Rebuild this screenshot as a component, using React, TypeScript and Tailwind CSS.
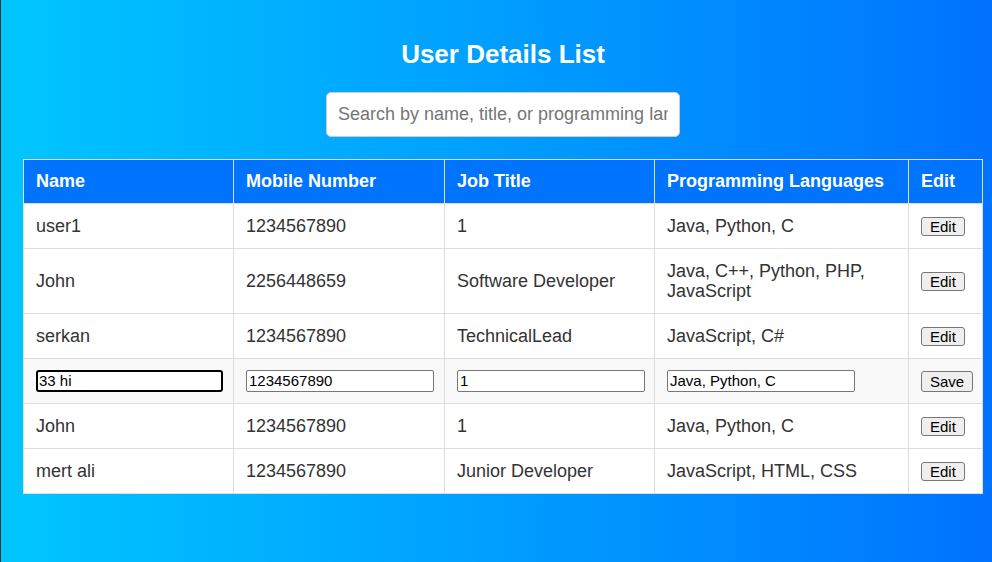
import { useState } from 'react'

type User = { id: number; name: string; mobile: string; title: string; langs: string }

const USERS: User[] = [
  { id: 1, name: 'user1', mobile: '1234567890', title: '1', langs: 'Java, Python, C' },
  { id: 2, name: 'John', mobile: '2256448659', title: 'Software Developer', langs: 'Java, C++, Python, PHP, JavaScript' },
  { id: 3, name: 'serkan', mobile: '1234567890', title: 'TechnicalLead', langs: 'JavaScript, C#' },
  { id: 4, name: '33 hi', mobile: '1234567890', title: '1', langs: 'Java, Python, C' },
  { id: 5, name: 'John', mobile: '1234567890', title: '1', langs: 'Java, Python, C' },
  { id: 6, name: 'mert ali', mobile: '1234567890', title: 'Junior Developer', langs: 'JavaScript, HTML, CSS' },
]

const btn = 'bg-[#efefef] border border-[#767676] rounded-[3px] text-[15px] leading-[17px] px-[8px] text-black'
const inp = 'w-[188px] h-[22px] border border-[#767676] rounded-[2px] px-[2px] text-[15px] text-black bg-white outline-none'
const th = 'border border-[#ddd] px-3 py-3 leading-[19px] font-bold'
const td = 'border border-[#ddd] px-3 py-3 leading-[20px] align-middle'
const ed = 'border border-[#ddd] px-3 py-[11px] align-middle'

export default function App() {
  const [editing] = useState(4)
  const [search, setSearch] = useState('')

  return (
    <div
      className="min-h-screen border-l border-[#333] bg-linear-to-r from-[#00c6ff] to-[#0072ff] pt-[39px] pl-[22px]"
      style={{ fontFamily: '"Liberation Sans", Arial, sans-serif' }}
    >
      <div className="w-[960px] flex flex-col items-center">
        <h2 className="text-white font-bold text-[26px] leading-[30px]">User Details List</h2>
        <input
          value={search}
          onChange={e => setSearch(e.target.value)}
          placeholder="Search by name, title, or programming languages"
          className="mt-[23px] w-[354px] h-[45px] bg-white rounded-[5px] border border-[#ccc] px-[11px] text-[18px] text-[#333] placeholder:text-[#757575] outline-none"
        />
        <table className="mt-[22px] w-[960px] table-fixed border-collapse border border-[#ddd] bg-white text-[18px] text-[#333]">
          <colgroup>
            <col className="w-[210px]" />
            <col className="w-[211px]" />
            <col className="w-[210px]" />
            <col className="w-[254px]" />
            <col />
          </colgroup>
          <thead>
            <tr className="bg-[#0073ff] text-white text-left">
              <th className={th}>Name</th>
              <th className={th}>Mobile Number</th>
              <th className={th}>Job Title</th>
              <th className={th}>Programming Languages</th>
              <th className={th}>Edit</th>
            </tr>
          </thead>
          <tbody>
            {USERS.map(u =>
              u.id === editing ? (
                <tr key={u.id} className="bg-[#f9f9f9]">
                  <td className={ed}>
                    <div className="h-[22px] flex items-center">
                      <input defaultValue={u.name} className="w-[187px] h-[22px] border-2 border-black rounded-[3px] px-[1px] text-[15px] text-black bg-white outline-none" />
                    </div>
                  </td>
                  <td className={ed}><div className="h-[22px] flex items-center"><input defaultValue={u.mobile} className={inp} /></div></td>
                  <td className={ed}><div className="h-[22px] flex items-center"><input defaultValue={u.title} className={inp} /></div></td>
                  <td className={ed}><div className="h-[22px] flex items-center"><input defaultValue={u.langs} className={inp} /></div></td>
                  <td className={ed}><div className="h-[22px] flex items-center"><button className={btn + ' py-[1px]'}>Save</button></div></td>
                </tr>
              ) : (
                <tr key={u.id}>
                  <td className={td}>{u.name}</td>
                  <td className={td}>{u.mobile}</td>
                  <td className={td}>{u.title}</td>
                  <td className={td}>{u.langs}</td>
                  <td className={td}><div className="h-5 flex items-center"><button className={btn}>Edit</button></div></td>
                </tr>
              )
            )}
          </tbody>
        </table>
      </div>
    </div>
  )
}
